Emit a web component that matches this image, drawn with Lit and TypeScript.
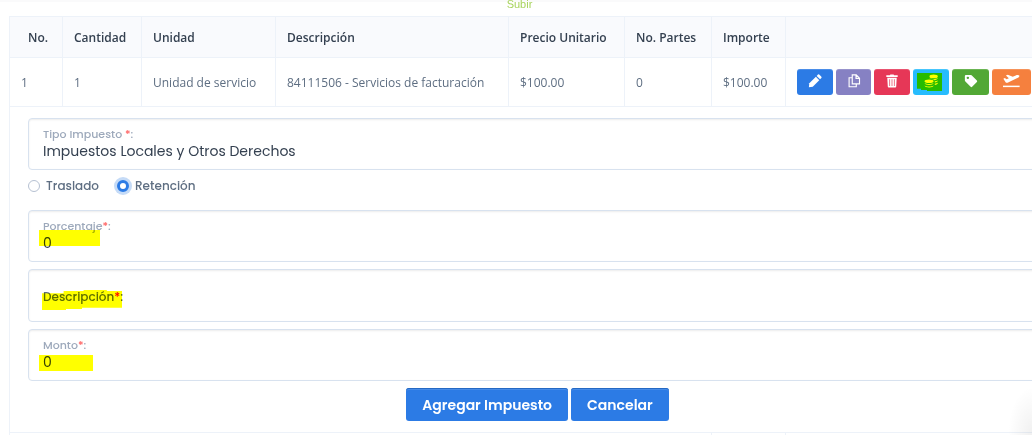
import { LitElement, html, css, svg } from "lit";
import { customElement, state } from "lit/decorators.js";

const pencil = svg`<path d="M1.5 10.6 9 3.1l3.9 3.9-7.5 7.5L1 15z"/><path d="m9.900 2.200 1.500-1.500q.7-.6 1.400 0l2.500 2.500q.6.7 0 1.400l-1.500 1.500z"/>`;
const copy = svg`<path fill="none" stroke="currentColor" stroke-width="1.300" d="M10.500 1H6v10.300h8.300V4.800zM10.300 1v4h4M5.700 4.300H2.400v10.300h8.200v-3"/>`;
const trash = svg`<path d="M1.500 1.500h4l.7-1h3.600l.7 1h4v1.800h-13z"/><path fill-rule="evenodd" d="M2.600 4.300h10.800l-.6 10.300q-.1.900-1 .9H4.200q-.9 0-1-.9zM5 6v7.800h.8V6zm2.600 0v7.800h.8V6zm2.600 0v7.800h.8V6z"/>`;
const coins = svg`<ellipse cx="11" cy="2.800" rx="4.800" ry="2.100"/><path d="M15.800 4.700c0 1.500-2 2.300-4.300 2.400-.8-.9-2.300-1.500-4.200-1.600-.7-.3-1.100-.6-1.100-.9 2.500 1.700 7.300 1.700 9.600.1zM15.800 7.500c0 1.200-1.300 1.900-3.500 2.200V8.200c1.500-.1 2.700-.4 3.500-.9zM15.800 10.300c0 1.200-1.300 1.900-3.500 2.200V11c1.500-.1 2.700-.4 3.500-.9z"/><ellipse cx="5.800" cy="8.300" rx="5.200" ry="2"/><path d="M.6 10.300c2.600 1.600 7.800 1.600 10.400 0 .3 3-10.700 3-10.400 0zM.6 13.100c2.600 1.600 7.800 1.600 10.400 0 .3 3.200-10.700 3.200-10.400 0z"/>`;
const tag = svg`<path fill-rule="evenodd" d="M1 2.200Q1 1 2.200 1h5.300q.7 0 1.200.5l6 6q.8.900 0 1.700l-5.400 5.400q-.9.800-1.700 0l-6-6Q1 8 1 7.400zM4.400 3a1.400 1.400 0 1 0 0 2.800 1.400 1.400 0 0 0 0-2.800z"/>`;
const plane = svg`<path d="M0 13.300h19v1.700H0z"/><path d="m.4 5.300 1.700-.6 2 1.300 2.600-1.200L3.300 1.700 5.500.8l5.600 2.400L14.600 1.600c1.400-.6 3.400-.7 4 .2.400 1-1 2.300-2.200 2.900L5.200 10q-1.200.4-2-.4z"/>`;

interface Action { name: string; color: string; icon: unknown; wide?: boolean; marked?: boolean }

const actions: Action[] = [
  { name: "Editar", color: "blue", icon: pencil },
  { name: "Duplicar", color: "purple", icon: copy },
  { name: "Eliminar", color: "red", icon: trash },
  { name: "Impuestos", color: "cyan", icon: coins, marked: true },
  { name: "Etiqueta", color: "green", icon: tag },
  { name: "Viaje", color: "orange", icon: plane, wide: true },
];

@customElement("app-root")
export class AppRoot extends LitElement {
  @state() private kind = "retencion";

  static styles = css`
    :host {
      display: block;
      position: relative;
      max-height: 100vh;
      overflow: hidden;
      background: #fff;
      font-family: "Open Sans", sans-serif;
      font-size: 12px;
      color: #5e6e82;
    }
    * { box-sizing: border-box; }
    .top {
      height: 16px;
      padding-left: 7px;
      text-align: center;
      background: linear-gradient(#fafafb 2px, #fff 2px);
    }
    .top a {
      display: block;
      font: 11px/8px "Liberation Sans", sans-serif;
      color: #a9d45e;
      text-decoration: none;
    }
    .scroll { padding-left: 9px; }
    table {
      width: calc(100% + 34px);
      table-layout: fixed;
      border-collapse: collapse;
    }
    .c-no { width: 53px; }
    .c-qty { width: 79px; }
    .c-unit { width: 134px; }
    .c-desc { width: 233px; }
    .c-price { width: 116px; }
    .c-parts { width: 87px; }
    .c-amount { width: 74px; }
    th, td {
      border: 1px solid #edf2f9;
      padding: 0 11px;
      text-align: left;
      white-space: nowrap;
      font-size: 12px;
      font-weight: 400;
    }
    th {
      height: 41px;
      background: #f9fafd;
      color: #344050;
      font-weight: 600;
    }
    th:first-child { padding-left: 18px; }
    td { height: 49px; }
    .detail { padding: 11px 18px; white-space: normal; }
    .next td { height: 30px; }
    .actions { display: flex; gap: 3px; }
    .act {
      position: relative;
      display: grid;
      place-items: center;
      width: 36px;
      height: 26px;
      padding: 0 0 3px;
      border: 0;
      border-radius: 3px;
      color: #fff;
      box-shadow: inset 0 1px 0 rgba(255, 255, 255, 0.15);
    }
    .act svg { height: 14px; fill: currentColor; display: block; }
    .wide { width: 39px; }
    .blue { background: #2c7be5; }
    .purple { background: #8681c3; width: 35px; }
    .red { background: #e63757; }
    .cyan { background: #27bcfd; }
    .green { background: #52a835; width: 37px; }
    .orange { background: #f5803e; }
    .mark {
      position: absolute;
      background: #ff0;
      mix-blend-mode: multiply;
      pointer-events: none;
    }
    .mark-icon {
      left: 4px;
      top: 4px;
      width: 25px;
      height: 18px;
      clip-path: polygon(0 0, 100% 0, 100% 100%, 40% 100%, 40% 94%, 16% 94%, 16% 88%, 0 88%);
    }
    .form {
      display: flex;
      flex-direction: column;
      font-family: Poppins, Inter, sans-serif;
    }
    .field {
      position: relative;
      display: flex;
      flex-direction: column;
      height: 52px;
      margin-bottom: 7px;
      padding: 8px 14px 0;
      border: 1px solid #d8e2ef;
      border-radius: 4px;
      box-shadow: inset 0 1px 2px rgba(0, 0, 0, 0.075);
    }
    .field label { font-size: 11px; line-height: 14px; font-weight: 500; color: #9da9bb; }
    .field i { font-style: normal; color: #f66; }
    .field input, .field select {
      appearance: none;
      width: 100%;
      height: 20px;
      margin: 0;
      padding: 0;
      border: 0;
      outline: 0;
      background: none;
      font: 400 14px/20px Poppins, Inter, sans-serif;
      color: #344050;
    }
    .field.empty { flex-direction: row; align-items: center; height: 53px; padding-top: 2px; }
    .field.empty label { flex: none; font-size: 12px; color: #5e6e82; }
    .empty i { color: #f00; }
    .mark-value { left: 10px; top: 19px; width: 61px; height: 16px; }
    .short { top: 25px; width: 54px; }
    .mark-label {
      left: 13px;
      top: 20px;
      width: 80px;
      height: 20px;
      clip-path: polygon(0 16%, 27% 16%, 27% 5%, 52% 5%, 52% 0, 81% 0, 81% 5%, 100% 5%, 100% 89%, 50% 89%, 50% 95%, 30% 95%, 30% 100%, 0 100%);
    }
    .radios {
      display: flex;
      gap: 18px;
      height: 18px;
      margin-bottom: 15px;
      font-size: 12px;
      font-weight: 500;
    }
    .radios label { display: flex; align-items: center; gap: 6px; }
    .radios input {
      appearance: none;
      width: 12px;
      height: 12px;
      margin: 0;
      border: 1px solid #b6c1d2;
      border-radius: 50%;
      background: #fff;
    }
    .radios input:checked {
      border: 3px solid #2c7be5;
      box-shadow: 0 0 0 3px #c5dbf7;
    }
    .buttons { display: flex; justify-content: center; gap: 3px; }
    .btn {
      height: 33px;
      padding: 0 16px;
      border: 0;
      border-radius: 3px;
      background: #2c7be5;
      box-shadow: inset 0 1px 0 #2569c3, inset 0 2px 0 rgba(255, 255, 255, 0.12);
      color: #fff;
      font: 600 14px/20px Poppins, Inter, sans-serif;
    }
    .glow {
      position: absolute;
      right: 0;
      bottom: 0;
      width: 24px;
      height: 48px;
      background: radial-gradient(ellipse farthest-side at 100% 100%, rgba(0, 0, 0, 0.06), rgba(0, 0, 0, 0));
      pointer-events: none;
    }
  `;

  private radio(value: string, text: string) {
    return html`<label>
      <input type="radio" name="kind" value=${value} .checked=${this.kind === value}
        @change=${() => (this.kind = value)} />${text}</label>`;
  }

  render() {
    return html`
      <div class="top"><a href="#">Subir</a></div>
      <div class="scroll">
        <table>
          <colgroup>
            <col class="c-no" /><col class="c-qty" /><col class="c-unit" /><col class="c-desc" />
            <col class="c-price" /><col class="c-parts" /><col class="c-amount" /><col />
          </colgroup>
          <thead>
            <tr>
              <th>No.</th><th>Cantidad</th><th>Unidad</th><th>Descripción</th>
              <th>Precio Unitario</th><th>No. Partes</th><th>Importe</th><th></th>
            </tr>
          </thead>
          <tbody>
            <tr>
              <td>1</td><td>1</td><td>Unidad de servicio</td><td>84111506 - Servicios de facturación</td>
              <td>$100.00</td><td>0</td><td>$100.00</td>
              <td>
                <div class="actions">
                  ${actions.map((a) => html`
                    <button class="act ${a.color} ${a.wide ? "wide" : ""}" aria-label=${a.name}>
                      <svg viewBox="0 0 ${a.wide ? 19 : 16} 16" aria-hidden="true">${a.icon}</svg>
                      ${a.marked ? html`<span class="mark mark-icon"></span>` : ""}
                    </button>`)}
                </div>
              </td>
            </tr>
            <tr>
              <td class="detail" colspan="8">
                <form class="form" @submit=${(e: Event) => e.preventDefault()}>
                  <div class="field">
                    <label for="tipo">Tipo Impuesto <i>*</i>:</label>
                    <select id="tipo"><option>Impuestos Locales y Otros Derechos</option></select>
                  </div>
                  <div class="radios">
                    ${this.radio("traslado", "Traslado")}${this.radio("retencion", "Retención")}
                  </div>
                  <div class="field">
                    <label for="porcentaje">Porcentaje<i>*</i>:</label>
                    <input id="porcentaje" value="0" />
                    <span class="mark mark-value"></span>
                  </div>
                  <div class="field empty">
                    <label for="descripcion">Descripción<i>*</i>:</label>
                    <input id="descripcion" />
                    <span class="mark mark-label"></span>
                  </div>
                  <div class="field">
                    <label for="monto">Monto<i>*</i>:</label>
                    <input id="monto" value="0" />
                    <span class="mark mark-value short"></span>
                  </div>
                  <div class="buttons">
                    <button class="btn">Agregar Impuesto</button>
                    <button class="btn" type="button">Cancelar</button>
                  </div>
                </form>
              </td>
            </tr>
            <tr class="next"><td colspan="6"></td><td></td><td></td></tr>
          </tbody>
        </table>
      </div>
      <div class="glow"></div>
    `;
  }
}
